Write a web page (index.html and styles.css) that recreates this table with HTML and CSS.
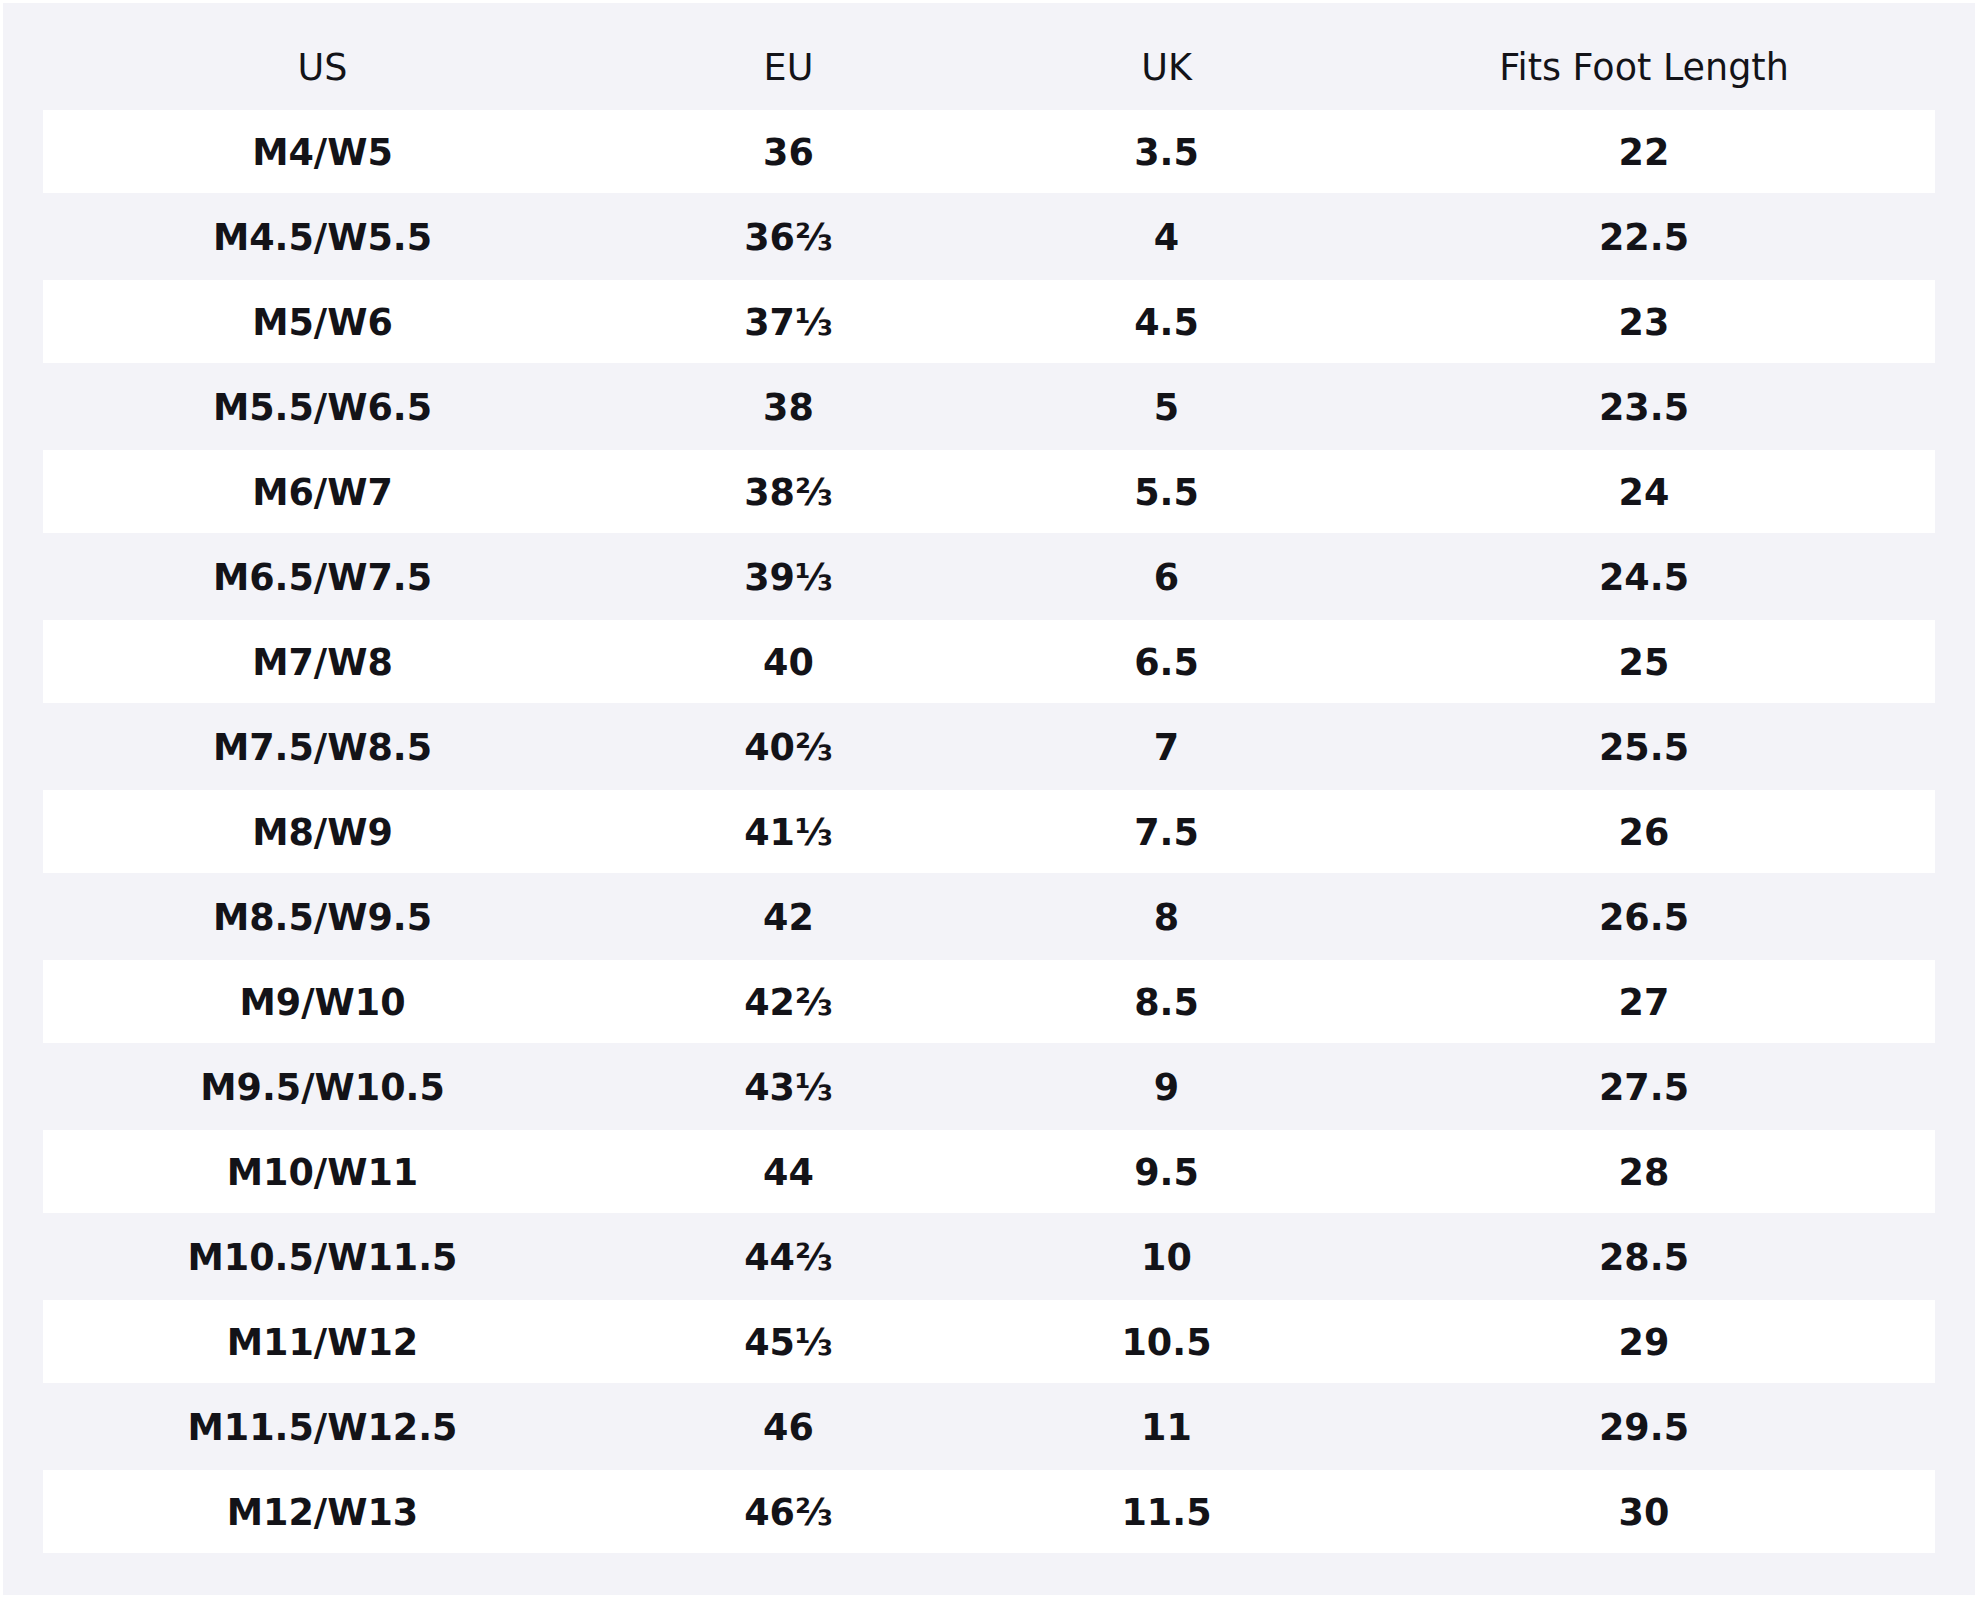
FILE: index.html
```html
<!DOCTYPE html>
<html lang="en">
<head>
<meta charset="utf-8">
<title>Size Chart</title>
<link rel="stylesheet" href="styles.css">
</head>
<body>
<div class="panel">
  <table class="chart">
    <colgroup>
      <col class="c-us">
      <col class="c-eu">
      <col class="c-uk">
      <col class="c-len">
    </colgroup>
    <thead>
      <tr><th>US</th><th>EU</th><th>UK</th><th class="len">Fits Foot Length</th></tr>
    </thead>
    <tbody>
      <tr><td>M4/W5</td><td>36</td><td>3.5</td><td class="len">22</td></tr>
      <tr><td>M4.5/W5.5</td><td>36⅔</td><td>4</td><td class="len">22.5</td></tr>
      <tr><td>M5/W6</td><td>37⅓</td><td>4.5</td><td class="len">23</td></tr>
      <tr><td>M5.5/W6.5</td><td>38</td><td>5</td><td class="len">23.5</td></tr>
      <tr><td>M6/W7</td><td>38⅔</td><td>5.5</td><td class="len">24</td></tr>
      <tr><td>M6.5/W7.5</td><td>39⅓</td><td>6</td><td class="len">24.5</td></tr>
      <tr><td>M7/W8</td><td>40</td><td>6.5</td><td class="len">25</td></tr>
      <tr><td>M7.5/W8.5</td><td>40⅔</td><td>7</td><td class="len">25.5</td></tr>
      <tr><td>M8/W9</td><td>41⅓</td><td>7.5</td><td class="len">26</td></tr>
      <tr><td>M8.5/W9.5</td><td>42</td><td>8</td><td class="len">26.5</td></tr>
      <tr><td>M9/W10</td><td>42⅔</td><td>8.5</td><td class="len">27</td></tr>
      <tr><td>M9.5/W10.5</td><td>43⅓</td><td>9</td><td class="len">27.5</td></tr>
      <tr><td>M10/W11</td><td>44</td><td>9.5</td><td class="len">28</td></tr>
      <tr><td>M10.5/W11.5</td><td>44⅔</td><td>10</td><td class="len">28.5</td></tr>
      <tr><td>M11/W12</td><td>45⅓</td><td>10.5</td><td class="len">29</td></tr>
      <tr><td>M11.5/W12.5</td><td>46</td><td>11</td><td class="len">29.5</td></tr>
      <tr><td>M12/W13</td><td>46⅔</td><td>11.5</td><td class="len">30</td></tr>
    </tbody>
  </table>
</div>
</body>
</html>
```

FILE: styles.css
```css
html, body {
  margin: 0;
  padding: 0;
  background: #ffffff;
}

body {
  padding: 3px;
  font-family: "DejaVu Sans", "Liberation Sans", sans-serif;
  color: #131318;
}

.panel {
  background: #f3f3f8;
  padding: 20px 40px 40px 40px;
}

.chart {
  width: 100%;
  table-layout: fixed;
  border-collapse: separate;
  border-spacing: 0 2px;
}

.c-us { width: 559px; }
.c-eu { width: 373px; }
.c-uk { width: 383px; }
.c-len { width: 577px; }

.chart th,
.chart td {
  box-sizing: border-box;
  height: 83px;
  padding: 2px 0 0 0;
  text-align: center;
  vertical-align: middle;
  font-size: 36.5px;
  line-height: normal;
}

.chart th {
  font-weight: normal;
}

.chart td {
  font-weight: bold;
}

.chart .len {
  padding-right: 5px;
}

.chart tbody tr:nth-child(odd) td {
  background: #ffffff;
}

.chart tbody tr:nth-child(even) td {
  background: transparent;
}
```
